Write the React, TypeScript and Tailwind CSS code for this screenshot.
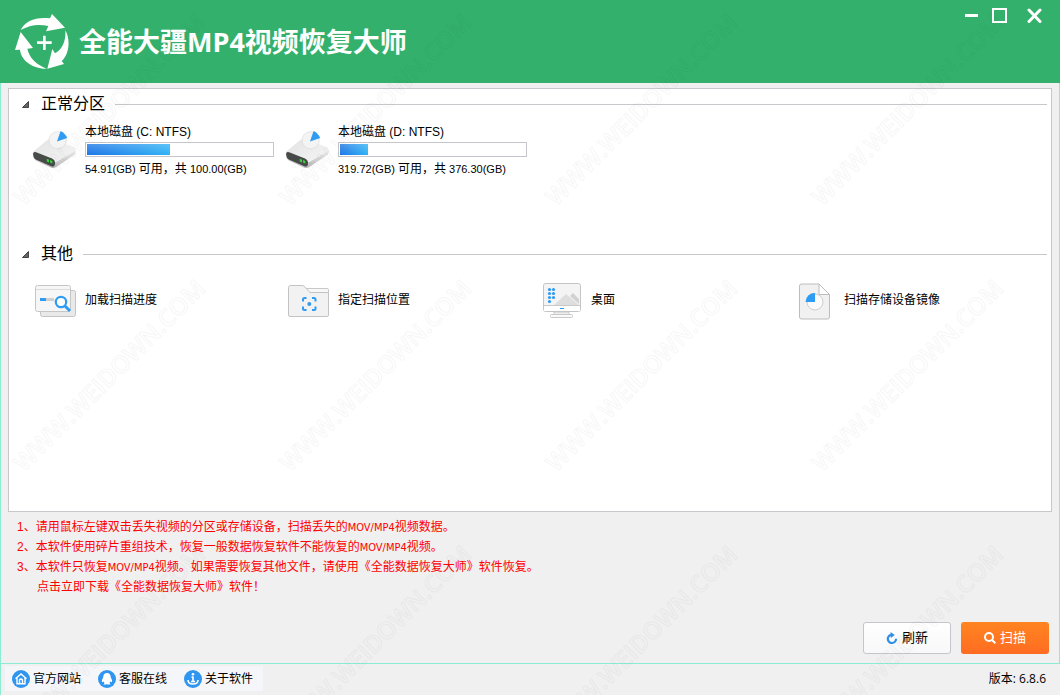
import React from "react";

const ui = "font-['Liberation_Sans','Noto_Sans_CJK_SC',sans-serif]";

function Logo() {
  return (
    <svg className="h-[57px] w-[55px] shrink-0" viewBox="45 36 165 171" fill="#fff" aria-hidden="true">
      <path d="M62 87C76 59 108 47 150 52L156 39L195 80L138 91L145 75C115 68 88 72 62 87Z" />
      <path d="M196 88C212 115 208 160 185 180L192 189L142 203L157 144L165 157C187 145 198 120 196 88Z" />
      <path d="M62 93L99 141L82 143C88 170 108 190 140 203C95 204 62 175 60 146L45 147Z" />
      <path d="M129 104h8v17h18v8h-18v18h-8v-18h-18v-8h18Z" />
    </svg>
  );
}

function DriveIcon() {
  return (
    <svg className="h-[39px] w-[44px] shrink-0" viewBox="48 62 132 118" aria-hidden="true">
      <defs>
        <linearGradient id="driveTop" x1="0" y1="0" x2="1" y2="1">
          <stop offset="0" stopColor="#e2e2e2" />
          <stop offset="1" stopColor="#f6f6f6" />
        </linearGradient>
        <linearGradient id="driveSide" x1="0" y1="0" x2="0" y2="1">
          <stop offset="0" stopColor="#f0f0f0" />
          <stop offset="1" stopColor="#b9b9b9" />
        </linearGradient>
      </defs>
      <path d="M50 131L116 152L179 121Q182 131 177 136L121 174Q114 179 106 176L58 154Q48 146 50 131Z" fill="url(#driveSide)" />
      <path d="M52 126L96 91Q102 87 110 89L175 115Q183 120 176 126L124 157Q118 161 110 158L56 135Q49 131 52 126Z" fill="url(#driveTop)" />
      <path d="M51 132Q53 127 60 129L108 148Q118 153 117 163Q116 175 106 172L60 152Q50 146 51 132Z" fill="#474a48" />
      <path d="M92 149l7 3v8l-7-3ZM102 153l7 3v7l-7-3Z" fill="#37d637" />
      <circle cx="125" cy="93" r="26" fill="#f4f4f4" stroke="#d9d9d9" strokeWidth="2" />
      <path d="M123 97L134 65Q148 72 154 86Z" fill="#2f9cf3" />
    </svg>
  );
}

function ProgressIcon() {
  return (
    <svg className="h-[33px] w-[42px]" viewBox="0 0 42 33" aria-hidden="true">
      <rect x="5.500" y="5.500" width="35" height="26" rx="2" fill="#e9e9e9" stroke="#c4c4c4" />
      <rect x=".5" y=".5" width="35" height="26" rx="2" fill="#f6f6f6" stroke="#c6c6c6" />
      <path d="M1 4.500h34" stroke="#dcdcdc" />
      <path d="M5 14.500h6" stroke="#2f9cf3" strokeWidth="3" />
      <path d="M11 14.500h8" stroke="#cfcfcf" strokeWidth="3" />
      <circle cx="26" cy="17" r="5.200" fill="#fff" stroke="#2f9cf3" strokeWidth="2.200" />
      <path d="M30 21l5 5" stroke="#2f9cf3" strokeWidth="3" />
    </svg>
  );
}

function FolderIcon() {
  return (
    <svg className="h-[33px] w-[42px]" viewBox="0 0 42 33" aria-hidden="true">
      <path d="M15 3.500H39Q40.500 3.500 40.500 5V10H15Z" fill="#f8f8f8" stroke="#c9c9c9" />
      <path d="M2.500 .5H14Q16 .5 17 2L21 6.500Q22 7.500 23 7.500H40.500V30Q40.500 31.500 39 31.500H2Q.5 31.500 .5 30V2.500Q.5 .5 2.500 .5Z" fill="#f2f2f2" stroke="#c3c3c3" />
      <path d="M15 16.500V14.500Q15 13 16.500 13H18.500M24 13H26Q27.500 13 27.500 14.500V16.500M27.500 21.500V23.500Q27.500 25 26 25H24M18.500 25H16.500Q15 25 15 23.500V21.500" fill="none" stroke="#2f9cf3" strokeWidth="2" />
      <circle cx="21.300" cy="19" r="2" fill="#2f9cf3" />
    </svg>
  );
}

function DesktopIcon() {
  return (
    <svg className="h-[36px] w-[40px]" viewBox="0 0 40 36" aria-hidden="true">
      <path d="M12 29h15v3h-15Z" fill="#eee" stroke="#ccc" />
      <rect x="8.500" y="31.500" width="22" height="3" rx="1" fill="#fafafa" stroke="#c9c9c9" />
      <rect x="1.500" y=".5" width="37" height="28" rx="2" fill="#f4f4f4" stroke="#c4c4c4" />
      <path d="M12 22L24 11L37 22Z" fill="#dedede" />
      <path d="M28 13L31 10L37 16V21Z" fill="#d2d2d2" />
      <rect x="2" y="23" width="36" height="5" fill="#fff" />
      <path d="M2 22.500h36" stroke="#c9c9c9" />
      <path d="M18 25.500h4" stroke="#2f9cf3" />
      {[6.5, 10.5, 14.5, 18.5].map((y) => (
        <circle key={y} cx="7.500" cy={y} r="1.600" fill="#2f9cf3" />
      ))}
      {[6.5, 10.5, 14.5].map((y) => (
        <circle key={y} cx="11.500" cy={y} r="1.600" fill="#2f9cf3" />
      ))}
    </svg>
  );
}

function ImageFileIcon() {
  return (
    <svg className="h-[37px] w-[32px]" viewBox="0 0 32 37" aria-hidden="true">
      <path d="M2.500 1H20L30.500 11.500V34Q30.500 36 28.500 36H2.500Q.5 36 .5 34V3Q.5 1 2.500 1Z" fill="#f1f1f1" stroke="#bdbdbd" />
      <path d="M20 1V11.500H30.500Z" fill="#fff" stroke="#bdbdbd" strokeLinejoin="round" />
      <circle cx="16" cy="19" r="8" fill="#fafafa" stroke="#cfcfcf" />
      <path d="M16 19V10A9 9 0 0 0 6.500 19Z" fill="#2f9cf3" />
    </svg>
  );
}

function SectionTitle({ children }: { children: React.ReactNode }) {
  return (
    <div className="flex h-5 items-center pl-[13px] pr-1">
      <svg className="mr-3 h-[7px] w-[7px]" viewBox="0 0 7 7" aria-hidden="true">
        <path d="M6.500 .5V6.500H.5Z" fill="#666" stroke="#444" />
      </svg>
      <h2 className="mr-2.5 text-base leading-5">{children}</h2>
      <div className="h-px flex-1 bg-[#c8c8cc]" />
    </div>
  );
}

const disks = [
  { letter: "C", free: "54.91", total: "100.00" },
  { letter: "D", free: "319.72", total: "376.30" },
];

function Disk({ letter, free, total }: (typeof disks)[number]) {
  const used = Number(total) - Number(free);
  return (
    <button className="flex items-center gap-[9px] text-left">
      <DriveIcon />
      <span className="flex w-[189px] flex-col">
        <span className="text-xs leading-5">本地磁盘 ({letter}: NTFS)</span>
        <span className="block h-[15px] border border-[#c5c5cb] bg-white p-px">
          <span
            className="block h-full bg-[linear-gradient(to_bottom,#ffffff38,#ffffff00),linear-gradient(to_right,#1c76e6,#2fb2f5)]"
            style={{ width: `${(used / Number(total)) * 100}%` }}
          />
        </span>
        <span className="mt-1 text-[11px] leading-4">
          {free}(GB) <span className="text-xs leading-4">可用，共</span> {total}(GB)
        </span>
      </span>
    </button>
  );
}

const others = [
  { label: "加载扫描进度", icon: <ProgressIcon /> },
  { label: "指定扫描位置", icon: <FolderIcon /> },
  { label: "桌面", icon: <DesktopIcon /> },
  { label: "扫描存储设备镜像", icon: <ImageFileIcon /> },
];

function Mov() {
  return <span className="font-['DejaVu_Sans_Condensed','DejaVu_Sans',sans-serif] text-[11px] leading-none">MOV/MP4</span>;
}

function RoundIcon({ children }: { children: React.ReactNode }) {
  return (
    <svg className="h-[18px] w-[18px]" viewBox="0 0 18 18" fill="none" stroke="#fff" aria-hidden="true">
      <circle cx="9" cy="9" r="9" fill="#2f95ee" stroke="none" />
      {children}
    </svg>
  );
}

const links = [
  {
    label: "官方网站",
    icon: (
      <RoundIcon>
        <path d="M3.500 8.800L9 4L14.500 8.800M5 8V13.700H13V8M7.500 13.500V10Q9 8 10.500 10V13.500" strokeWidth="1.400" />
      </RoundIcon>
    ),
  },
  {
    label: "客服在线",
    icon: (
      <RoundIcon>
        <path d="M9 3C6.500 3 5.200 5 5.200 7.500C4 9.500 3.400 11.500 4.300 12.300L5.500 11.500L6.500 13L5.500 14.500H8.500L9 14L9.500 14.500H12.500L11.500 13L12.500 11.500L13.700 12.300C14.600 11.500 14 9.500 12.800 7.500C12.800 5 11.500 3 9 3Z" fill="#fff" stroke="none" />
      </RoundIcon>
    ),
  },
  {
    label: "关于软件",
    icon: (
      <RoundIcon>
        <path d="M9 6.500V11.500M7.500 7H9M7 11.500H11" strokeWidth="1.600" />
        <circle cx="9" cy="4.300" r="1.300" fill="#fff" stroke="none" />
        <path d="M4 10Q4 14 9 14T14 10" strokeWidth="1.600" />
      </RoundIcon>
    ),
  },
];

function Watermark() {
  return (
    <svg className="pointer-events-none absolute inset-0 h-full w-full" aria-hidden="true">
      <defs>
        <pattern id="mark" width="266" height="266" patternUnits="userSpaceOnUse">
          <text
            transform="translate(24 207) rotate(-45)"
            className="font-['Open_Sans',sans-serif] text-[24px] font-semibold"
            fill="none"
            stroke="#000"
            strokeOpacity=".035"
            strokeWidth="1"
          >
            WWW.WEIDOWN.COM
          </text>
        </pattern>
      </defs>
      <rect width="100%" height="100%" fill="url(#mark)" />
    </svg>
  );
}

export default function App() {
  return (
    <div className={`relative flex min-h-screen flex-col bg-[#f0f0f0] text-black ${ui}`}>
      <header className="flex h-[83px] items-center justify-between bg-[#33b16c] pl-[15px] pr-[18px] text-white">
        <div className="flex items-center gap-[9px]">
          <Logo />
          <h1 className="font-['Open_Sans','Noto_Sans_CJK_SC',sans-serif] text-[27px] font-bold leading-9">全能大疆MP4视频恢复大师</h1>
        </div>
        <div className="flex items-center self-start pt-2">
          <button aria-label="最小化" className="mr-3.5">
            <svg className="h-4 w-[13px]" viewBox="0 0 13 16" aria-hidden="true">
              <path d="M0 7.500h13" stroke="#fff" strokeWidth="3" />
            </svg>
          </button>
          <button aria-label="最大化" className="mr-5">
            <svg className="h-4 w-[15px]" viewBox="0 0 15 16" aria-hidden="true">
              <rect x="1" y="1" width="13" height="13" fill="none" stroke="#fff" strokeWidth="2" />
            </svg>
          </button>
          <button aria-label="关闭">
            <svg className="h-4 w-[15px]" viewBox="0 0 15 16" aria-hidden="true">
              <path d="M2 2L13 13.500M13 2L2 13.500" stroke="#fff" strokeWidth="3" strokeLinecap="round" />
            </svg>
          </button>
        </div>
      </header>

      <main className="flex flex-1 flex-col border-x border-b border-[#8cecd3] px-[7px] pt-[5px]">
        <div className="flex-1 border border-[#c8c8cc] bg-white pt-[5px]">
          <section>
            <SectionTitle>正常分区</SectionTitle>
            <div className="grid grid-cols-[repeat(auto-fill,253px)] pb-[67px] pl-[23px] pt-2">
              {disks.map((disk) => (
                <Disk key={disk.letter} {...disk} />
              ))}
            </div>
          </section>
          <section>
            <SectionTitle>其他</SectionTitle>
            <div className="grid grid-cols-[repeat(auto-fill,253px)] pl-6 pt-4">
              {others.map(({ label, icon }) => (
                <button key={label} className="flex h-10 items-center gap-[7px] text-left text-xs">
                  <span className="flex w-[45px] justify-center pt-0.5">{icon}</span>
                  {label}
                </button>
              ))}
            </div>
          </section>
        </div>

        <ol className="pl-[9px] pt-[5px] text-xs leading-5 text-[#ff0000]">
          <li>1、请用鼠标左键双击丢失视频的分区或存储设备，扫描丢失的<Mov />视频数据。</li>
          <li>2、本软件使用碎片重组技术，恢复一般数据恢复软件不能恢复的<Mov />视频。</li>
          <li>3、本软件只恢复<Mov />视频。如果需要恢复其他文件，请使用《全能数据恢复大师》软件恢复。</li>
          <li className="pl-5">
            <a href="#download">点击立即下载《全能数据恢复大师》软件！</a>
          </li>
        </ol>

        <div className="flex justify-end gap-2.5 pb-[9px] pr-[3px] pt-[25px] text-[13px]">
          <button className="flex h-8 w-[88px] items-center justify-center gap-1 rounded-[3px] border border-[#c5c5cb] bg-linear-to-b from-white to-[#f8f8f8]">
            <svg className="h-3 w-3" viewBox="0 0 12 12" aria-hidden="true">
              <path d="M10 6.800A4.100 4.100 0 1 1 5 2.900" fill="none" stroke="#2f8fe6" strokeWidth="2.200" />
              <path d="M4.500 0L8.800 3L4.800 6Z" fill="#2f8fe6" />
            </svg>
            刷新
          </button>
          <button className="flex h-8 w-[88px] items-center justify-center gap-1 rounded-[3px] bg-linear-to-b from-[#ff8420] to-[#ff6c22] text-white">
            <svg className="h-3 w-3" viewBox="0 0 12 12" fill="none" stroke="#fff" strokeWidth="2" aria-hidden="true">
              <circle cx="5" cy="5" r="4" />
              <path d="M8 8L11.300 11.300" />
            </svg>
            扫描
          </button>
        </div>
      </main>

      <footer className="flex h-[31px] items-center justify-between border-l border-[#8cecd3] pb-0.5 pl-1 pr-3.5 text-xs">
        <nav className="flex h-[25px] items-center gap-[17px] bg-[#f5f6f9] pl-[7px] pr-2.5">
          {links.map(({ label, icon }) => (
            <a key={label} href="#" className="flex items-center gap-[3px]">
              {icon}
              {label}
            </a>
          ))}
        </nav>
        <span className="font-['Open_Sans','Noto_Sans_CJK_SC',sans-serif]">版本: 6.8.6</span>
      </footer>
      <Watermark />
    </div>
  );
}
